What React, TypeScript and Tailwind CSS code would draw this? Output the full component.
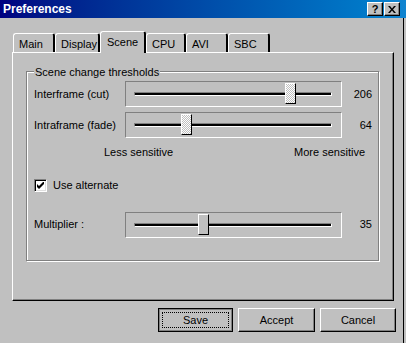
import React from 'react';

const font = { fontFamily: '"Liberation Sans", Arial, sans-serif' };

interface SliderRowProps {
  label: string;
  value: number;
  thumbLeft: number;
  focused?: boolean;
  className?: string;
}

const Thumb: React.FC<{ left: number; focused?: boolean }> = ({ left, focused }) => (
  <div
    className="absolute top-[1px] w-[11px] h-[21px] border border-t-white border-l-white border-r-black border-b-black shadow-[inset_-1px_-1px_0_#808080]"
    style={{ left }}
  >
    <div
      className={
        focused
          ? 'w-full h-full bg-[repeating-conic-gradient(#ffffff_0_25%,#c0c0c0_0_50%)] bg-[length:2px_2px]'
          : 'w-full h-full bg-[#c0c0c0]'
      }
    />
  </div>
);

const SliderRow: React.FC<SliderRowProps> = ({ label, value, thumbLeft, focused, className }) => (
  <div className={`flex items-center ${className ?? ''}`}>
    <span className="w-[98px] pl-[7px]">{label}</span>
    <div className="relative w-[217px] h-[26px] border border-t-[#808080] border-l-[#808080] border-r-white border-b-white">
      <div className="absolute left-[8px] right-[9px] top-[10px] h-[4px] border border-t-[#808080] border-l-[#808080] border-b-white border-r-white bg-black" />
      <Thumb left={thumbLeft} focused={focused} />
    </div>
    <span className="w-[30px] text-right">{value}</span>
  </div>
);

const Tab: React.FC<{ label: string; width: string; active?: boolean }> = ({ label, width, active }) => (
  <div
    className={
      active
        ? `${width} h-[22px] -mb-[1px] relative z-10 bg-[#c0c0c0] border-t border-l border-t-white border-l-white border-r-2 border-r-black rounded-t-[3px] pl-[6px] pt-[2px]`
        : `${width} h-[19px] bg-[#c0c0c0] border-t border-l border-t-white border-l-white border-r-2 border-r-black rounded-t-[3px] pl-[5px] pt-[2px]`
    }
  >
    {label}
  </div>
);

const Win98Button: React.FC<{ label: string; isDefault?: boolean; width: string }> = ({ label, isDefault, width }) =>
  isDefault ? (
    <button className={`${width} h-[24px] border border-black bg-[#c0c0c0] p-0`}>
      <div className="w-full h-full border border-[#808080] p-[2px]">
        <div className="w-full h-full border border-dotted border-black flex items-center justify-center">{label}</div>
      </div>
    </button>
  ) : (
    <button className={`${width} h-[24px] border border-t-white border-l-white border-r-black border-b-black shadow-[inset_-1px_-1px_0_#808080] bg-[#c0c0c0] flex items-center justify-center`}>
      {label}
    </button>
  );

const TitleButton: React.FC<{ children: React.ReactNode }> = ({ children }) => (
  <div className="w-[16px] h-[14px] bg-[#c0c0c0] border border-t-white border-l-white border-r-black border-b-black shadow-[inset_-1px_-1px_0_#808080] flex items-center justify-center text-black font-bold text-[11px] leading-none">
    {children}
  </div>
);

export default function App() {
  return (
    <div className="w-[406px] h-[343px] bg-[#c0c0c0] overflow-hidden text-[11px] text-black" style={font}>
      {/* Title bar */}
      <div className="h-[18px] flex items-center pl-[3px] pr-[6px] bg-gradient-to-r from-[#000080] to-[#1084d0]">
        <span className="text-white font-bold text-[12px]">Preferences</span>
        <div className="ml-auto flex gap-[1px]">
          <TitleButton>?</TitleButton>
          <TitleButton>
            <svg width="8" height="7" viewBox="0 0 8 7">
              <path d="M0 0h2l2 2.5L6 0h2L5 3.5 8 7H6L4 4.5 2 7H0l3-3.5z" fill="black" />
            </svg>
          </TitleButton>
        </div>
      </div>

      <div className="w-[404px] h-[325px] border-r border-black pl-[12px]">
        {/* Tabs */}
        <div className="flex items-end pl-[1px] pt-[13px]">
          <Tab label="Main" width="w-[42px]" />
          <Tab label="Display" width="w-[45px]" />
          <Tab label="Scene" width="w-[46px]" active />
          <Tab label="CPU" width="w-[40px]" />
          <Tab label="AVI" width="w-[42px]" />
          <Tab label="SBC" width="w-[42px]" />
        </div>

        {/* Panel */}
        <div className="w-[382px] h-[249px] border border-t-white border-l-white border-r-black border-b-black shadow-[inset_-1px_-1px_0_#808080] pl-[13px] pt-[18px]">
          <div className="relative w-[353px] h-[190px] border border-[#808080] shadow-[1px_1px_0_#ffffff,inset_1px_1px_0_#ffffff]">
            <span className="absolute left-[7px] -top-[8px] bg-[#c0c0c0] px-[1px]">Scene change thresholds</span>
            <SliderRow className="mt-[9px]" label="Interframe (cut)" value={206} thumbLeft={159} focused />
            <SliderRow className="mt-[5px]" label="Intraframe (fade)" value={64} thumbLeft={55} focused />
            <div className="flex mt-[7px] h-[14px] items-center">
              <span className="ml-[77px]">Less sensitive</span>
              <span className="ml-auto mr-[13px]">More sensitive</span>
            </div>
            <div className="flex items-center mt-[18px] pl-[7px] gap-[6px]">
              <div className="w-[13px] h-[13px] bg-white border border-t-[#808080] border-l-[#808080] border-r-white border-b-white shadow-[inset_1px_1px_0_#000000,inset_-1px_-1px_0_#dfdfdf] flex items-center justify-center">
                <svg width="7" height="7" viewBox="0 0 7 7">
                  <path d="M0 2v3l2 2 5-5V-1L2 4z" fill="black" />
                </svg>
              </div>
              <span>Use alternate</span>
            </div>
            <SliderRow className="mt-[18px]" label="Multiplier :" value={35} thumbLeft={72} />
          </div>
        </div>

        {/* Buttons */}
        <div className="flex mt-[7px] pl-[146px] gap-[5px]">
          <Win98Button label="Save" width="w-[75px]" isDefault />
          <Win98Button label="Accept" width="w-[77px]" />
          <Win98Button label="Cancel" width="w-[76px]" />
        </div>
      </div>
    </div>
  );
}
